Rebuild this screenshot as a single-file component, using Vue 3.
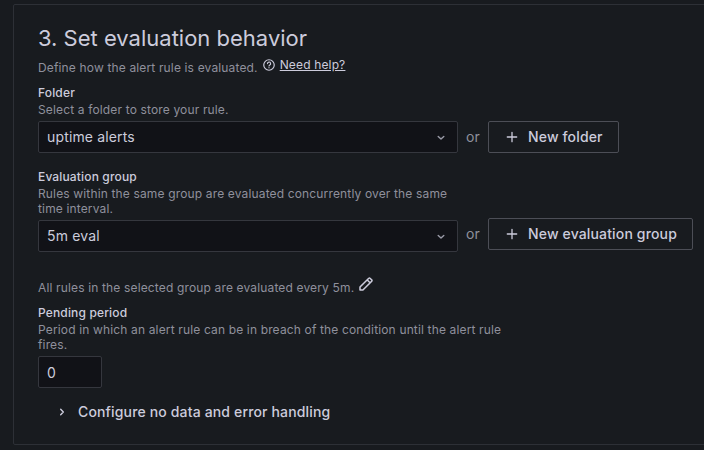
<script setup>
const fields = [
  {
    id: 'folder',
    label: 'Folder',
    hint: 'Select a folder to store your rule.',
    value: 'uptime alerts',
    action: 'New folder',
  },
  {
    id: 'group',
    label: 'Evaluation group',
    hint: 'Rules within the same group are evaluated concurrently over the same time interval.',
    value: '5m eval',
    action: 'New evaluation group',
  },
]
</script>

<template>
  <main class="page">
    <section class="card">
      <h3 class="title">3. Set evaluation behavior</h3>
      <div class="intro">
        <span>Define how the alert rule is evaluated.</span>
        <a class="help">
          <svg class="help-icon" viewBox="0 0 24 24" width="14" height="14">
            <circle cx="12" cy="12" r="9" />
            <path d="M9.4 9.6a2.7 2.7 0 1 1 4 2.4c-.9.5-1.4.9-1.4 1.7" />
            <path d="M12 16.5v.3" />
          </svg>
          <span class="help-text">Need help?</span>
        </a>
      </div>

      <div v-for="f in fields" :key="f.id" class="field" :class="f.id">
        <div class="label">{{ f.label }}</div>
        <div class="hint">{{ f.hint }}</div>
        <div class="row">
          <div class="select">
            <span class="text">{{ f.value }}</span>
            <svg viewBox="0 0 16 16" width="16" height="16">
              <path d="M5.2 7.5 8 10.1l2.8-2.6" />
            </svg>
          </div>
          <span class="or text">or</span>
          <button class="btn" type="button">
            <svg viewBox="0 0 16 16" width="16" height="16">
              <path d="M8 3.3v9.4M3.3 8h9.4" />
            </svg>
            <span class="text">{{ f.action }}</span>
          </button>
        </div>
      </div>

      <div class="summary">
        <span>All rules in the selected group are evaluated every 5m.</span>
        <svg class="pen" viewBox="0 0 24 24" width="16" height="16">
          <path d="M3 16.6 16.2 3.4a1.3 1.3 0 0 1 1.9 0l2.5 2.5a1.3 1.3 0 0 1 0 1.9L7.4 21H3zM13.9 5.9l4.2 4.2" />
        </svg>
      </div>

      <div class="pending">
        <div class="label">Pending period</div>
        <div class="hint">Period in which an alert rule can be in breach of the condition until the alert rule fires.</div>
        <div class="number">0</div>
      </div>

      <div class="collapse">
        <svg viewBox="0 0 16 16" width="16" height="16">
          <path d="M6.7 5.3 9.3 8l-2.6 2.7" />
        </svg>
        <span class="text">Configure no data and error handling</span>
      </div>
    </section>
  </main>
</template>

<style>
body {
  margin: 0;
  background: #181b1f;
  overflow: hidden;
}
</style>

<style scoped>
.page {
  box-sizing: border-box;
  height: 450px;
  padding: 4px 0 5px 13px;
  overflow: hidden;
  background: #181b1f;
  color: #ccccdc;
  font-family: Inter, sans-serif;
  font-size: 14px;
  letter-spacing: 0.15px;
}
.page * {
  box-sizing: border-box;
}
.card {
  width: 720px;
  height: 441px;
  padding: 21px 24px 0;
  border: 1px solid #2d3036;
  border-radius: 2px;
}
svg {
  flex: none;
  fill: none;
  stroke: currentColor;
  stroke-linecap: round;
  stroke-linejoin: round;
}
.text {
  padding-bottom: 2px;
}
.title {
  margin: 0;
  font-size: 22px;
  font-weight: 400;
  line-height: 24px;
  letter-spacing: 0;
}
.intro {
  display: flex;
  gap: 4px;
  height: 25px;
  margin-top: 10px;
  font-size: 12px;
  line-height: 16px;
  color: #8f909c;
}
.help {
  display: flex;
  gap: 4px;
  height: 16px;
  margin-top: -3px;
  color: #ccccdc;
}
.help-icon {
  margin-top: 1px;
  stroke-width: 2;
}
.help-text {
  text-decoration: underline;
}
.label {
  font-size: 12px;
  font-weight: 500;
  line-height: 15px;
}
.hint {
  width: 480px;
  margin-top: 2px;
  font-size: 12px;
  line-height: 15px;
  color: #8f909c;
}
.field .hint {
  width: 420px;
}
.row {
  display: flex;
  align-items: center;
  gap: 8px;
  margin-top: 4px;
}
.folder {
  height: 84px;
}
.group {
  height: 111px;
}
.group .row {
  align-items: flex-start;
  margin-top: 2px;
}
.group .select {
  margin-top: 2px;
}
.group .or {
  line-height: 32px;
}
.select {
  display: flex;
  align-items: center;
  justify-content: space-between;
  width: 420px;
  height: 32px;
  padding: 0 8px;
  border: 1px solid #35373e;
  border-radius: 2px;
  background: #111217;
}
.select svg {
  color: #9a9ba8;
  stroke-width: 1.4;
}
.or {
  width: 14px;
  color: #8f909c;
}
.btn {
  display: flex;
  align-items: center;
  gap: 8px;
  height: 32px;
  padding: 0 15px;
  border: 1px solid #4c4e56;
  border-radius: 2px;
  background: transparent;
  color: #ccccdc;
  font: 500 14px Inter, sans-serif;
  letter-spacing: 0.15px;
  white-space: nowrap;
}
.btn svg {
  stroke-width: 1.3;
}
.summary {
  display: flex;
  gap: 4px;
  height: 25px;
  font-size: 12px;
  line-height: 16px;
  color: #8f909c;
}
.pen {
  margin-top: -4px;
  color: #ccccdc;
  stroke-width: 2.3;
}
.number {
  display: flex;
  align-items: center;
  width: 64px;
  height: 32px;
  margin-top: 4px;
  padding: 0 8px;
  border: 1px solid #35373e;
  border-radius: 2px;
  background: #111217;
}
.collapse {
  display: flex;
  align-items: center;
  gap: 8px;
  height: 24px;
  margin-top: 12px;
  padding-left: 16px;
  font-weight: 500;
}
.collapse svg {
  stroke-width: 1.4;
}
</style>
